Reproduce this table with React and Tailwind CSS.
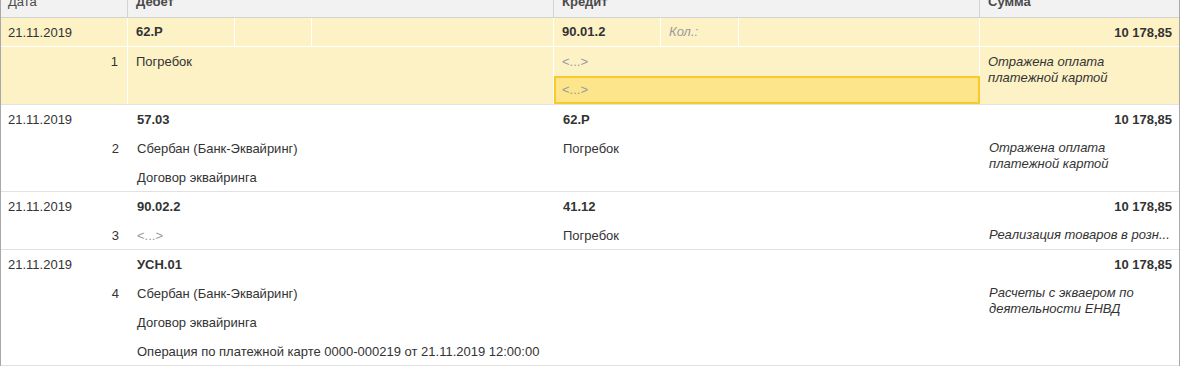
import React from "react";

const font = { fontFamily: '"Liberation Sans", Arial, sans-serif' };

// one text line of the grid
function Line({ children, className = "" }) {
  return (
    <div className={`h-[29px] leading-[29px] whitespace-nowrap ${className}`}>
      {children}
    </div>
  );
}

function Comment({ lines, className = "" }) {
  return (
    <div className={`pl-2 pr-[7px] italic leading-[16px] ${className}`}>
      {lines.map((l, i) => (
        <div key={i} className="whitespace-nowrap">
          {l}
        </div>
      ))}
    </div>
  );
}

const rows = [
  {
    h: "h-[87px]",
    date: "21.11.2019",
    n: 2,
    debit: ["57.03", "Сбербан (Банк-Эквайринг)", "Договор эквайринга"],
    credit: ["62.Р", "Погребок"],
    sum: "10 178,85",
    comment: ["Отражена оплата", "платежной картой"],
  },
  {
    h: "h-[58px]",
    date: "21.11.2019",
    n: 3,
    debit: ["90.02.2", null],
    credit: ["41.12", "Погребок"],
    sum: "10 178,85",
    comment: ["Реализация товаров в розн..."],
  },
  {
    h: "h-[116px]",
    date: "21.11.2019",
    n: 4,
    debit: [
      "УСН.01",
      "Сбербан (Банк-Эквайринг)",
      "Договор эквайринга",
      "Операция по платежной карте 0000-000219 от 21.11.2019 12:00:00",
    ],
    credit: [],
    sum: "10 178,85",
    comment: ["Расчеты с экваером по", "деятельности ЕНВД"],
  },
];

const cols = "grid grid-cols-[127px_426px_426px_199px]";

export default function App() {
  return (
    <div
      style={font}
      className="w-[1182px] h-[368px] overflow-hidden bg-white text-[13px] text-[#333]"
    >
      <div className="w-[1180px] border-l border-r border-[#a8a8a8]">
        {/* Header */}
        <div
          className={`${cols} h-[18px] overflow-hidden bg-[#f2f2f2] border-b border-[#d2d2d2] text-[#4a4a4a]`}
        >
          <div className="border-r border-[#d2d2d2] pl-[7px] -mt-[6px] leading-[15px]">
            Дата
          </div>
          <div className="border-r border-[#d2d2d2] pl-2 -mt-[6px] leading-[15px] font-bold">
            Дебет
          </div>
          <div className="border-r border-[#d2d2d2] pl-2 -mt-[6px] leading-[15px] font-bold">
            Кредит
          </div>
          <div className="pl-2 -mt-[6px] leading-[15px] font-bold">Сумма</div>
        </div>

        {/* Selected row */}
        <div
          className={`${cols} h-[87px] overflow-hidden bg-[#fdf2c6] border-b border-[#e2e2e2]`}
        >
          <div className="border-r border-white">
            <Line className="border-b border-white pl-[7px]">21.11.2019</Line>
            <Line className="text-right pr-[9px]">1</Line>
          </div>
          <div className="border-r border-white">
            <div className="flex h-[29px] border-b border-white">
              <div className="w-[107px] border-r border-white pl-2 leading-[28px] font-bold">
                62.Р
              </div>
              <div className="w-[77px] border-r border-white" />
              <div className="flex-1" />
            </div>
            <Line className="pl-2">Погребок</Line>
          </div>
          <div className="border-r border-white">
            <div className="flex h-[29px] border-b border-white">
              <div className="w-[107px] border-r border-white pl-2 leading-[28px] font-bold">
                90.01.2
              </div>
              <div className="w-[78px] border-r border-white pl-2 leading-[28px] italic text-[#9a9a9a]">
                Кол.:
              </div>
              <div className="flex-1" />
            </div>
            <Line className="pl-2 text-[#9a9a9a]">&lt;...&gt;</Line>
            <div className="h-[28px] -mr-px border-2 border-[#f7ca2a] bg-[#fde58c] pl-[6px] leading-[24px] text-[#9a9a9a]">
              &lt;...&gt;
            </div>
          </div>
          <div>
            <Line className="border-b border-white text-right pr-[7px] font-bold">
              10 178,85
            </Line>
            <Comment className="pt-[7px]" lines={["Отражена оплата", "платежной картой"]} />
          </div>
        </div>

        {/* Other rows */}
        {rows.map((r) => (
          <div
            key={r.n}
            className={`${cols} ${r.h} overflow-hidden border-b border-[#e2e2e2]`}
          >
            <div>
              <Line className="pl-[7px]">{r.date}</Line>
              <Line className="text-right pr-[9px]">{r.n}</Line>
            </div>
            <div className="pl-px">
              {r.debit.map((d, i) => (
                <Line
                  key={i}
                  className={`pl-2 ${i === 0 ? "font-bold" : ""} ${
                    d === null ? "text-[#9a9a9a]" : ""
                  }`}
                >
                  {d === null ? "<...>" : d}
                </Line>
              ))}
            </div>
            <div className="pl-px">
              {r.credit.map((c, i) => (
                <Line key={i} className={`pl-2 ${i === 0 ? "font-bold" : ""}`}>
                  {c}
                </Line>
              ))}
            </div>
            <div className="pl-px">
              <Line className="text-right pr-[7px] font-bold">{r.sum}</Line>
              <Comment className="pt-[6px] overflow-hidden" lines={r.comment} />
            </div>
          </div>
        ))}
      </div>
    </div>
  );
}
